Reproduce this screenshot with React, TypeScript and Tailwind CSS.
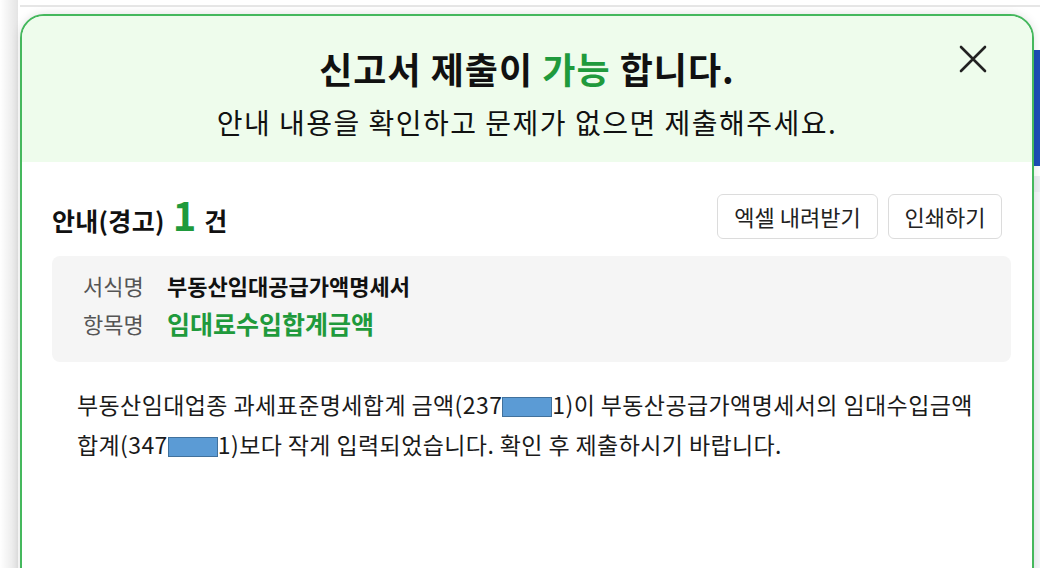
const FONT = "font-['Noto_Sans_CJK_KR','Noto_Sans',sans-serif]";

function Redacted({ w }: { w: number }) {
  return (
    <span
      className="inline-block h-[20px] bg-[#5b9bd5] border border-[#41719c] align-[-3px]"
      style={{ width: w }}
    />
  );
}

export default function App() {
  return (
    <div className={`relative w-[1040px] h-[568px] overflow-hidden bg-white ${FONT}`}>
      {/* page behind the modal */}
      <div className="absolute inset-0 flex flex-col">
        <div className="h-[5px]" />
        <div className="ml-[20px] h-[2px] bg-[#e6e6e6]" />
        <div className="flex-1 flex justify-end">
          <div className="w-[8px] flex flex-col">
            <div className="h-[43px]" />
            <div className="h-[116px] bg-[#1d4fb8]" />
            <div className="h-[10px]" />
            <div className="h-[16px] bg-[#eceff3]" />
            <div className="flex-1 bg-[#f4f6f9]" />
          </div>
        </div>
      </div>
      <div className="absolute left-0 top-0 bottom-0 w-[18px] bg-gradient-to-r from-white to-[#e4e4e4]" />

      {/* modal */}
      <div className="absolute left-[20px] top-[14px] w-[1014px] h-[600px] rounded-t-[24px] border-2 border-[#45b85d] bg-white overflow-hidden shadow-[0_0_10px_rgba(0,0,0,0.12)]">
        <div className="relative h-[146px] bg-[#eefcec] flex flex-col items-center pt-[28px]">
          <h1 className="text-[36px] font-bold leading-[48px] text-[#111] tracking-[1px]">
            신고서 제출이 <span className="text-[#1f9a3c]">가능</span> 합니다.
          </h1>
          <p className="mt-[10px] text-[28px] leading-[40px] text-[#111] tracking-[1.5px]">
            안내 내용을 확인하고 문제가 없으면 제출해주세요.
          </p>
          <button className="absolute right-[45px] top-[29px]">
            <svg width="28" height="28" viewBox="0 0 28 28" fill="none" stroke="#222" strokeWidth="2.6" strokeLinecap="round">
              <path d="M2 2L26 26M26 2L2 26" />
            </svg>
          </button>
        </div>

        <div className="px-[30px]">
          <div className="flex items-center justify-between pt-[32px]">
            <div className="flex items-baseline gap-[8px] text-[#111] font-bold">
              <span className="text-[25px] tracking-[0.3px]">안내(경고)</span>
              <span className="text-[40px] leading-none text-[#1f9a3c]">1</span>
              <span className="text-[25px]">건</span>
            </div>
            <div className="flex gap-[10px]">
              <button className="h-[45px] w-[161px] rounded-[6px] border border-[#dcdcdc] bg-white text-[22px] text-[#222]">
                엑셀 내려받기
              </button>
              <button className="h-[45px] w-[114px] rounded-[6px] border border-[#dcdcdc] bg-white text-[22px] text-[#222]">
                인쇄하기
              </button>
            </div>
          </div>

          <div className="mt-[16px] mr-[-9px] h-[106px] rounded-[8px] bg-[#f5f5f5] pl-[31px] pt-[13px] flex flex-col gap-[4px]">
            <div className="flex items-center h-[34px]">
              <span className="w-[84px] text-[22px] text-[#555]">서식명</span>
              <span className="text-[22px] font-bold text-[#111]">부동산임대공급가액명세서</span>
            </div>
            <div className="flex items-center h-[34px]">
              <span className="w-[84px] text-[22px] text-[#555]">항목명</span>
              <span className="text-[25px] font-bold text-[#1f9a3c]">임대료수입합계금액</span>
            </div>
          </div>

          <p className="mt-[22px] pl-[25px] text-[23px] leading-[40px] text-[#1a1a1a] tracking-[0.4px]">
            부동산임대업종 과세표준명세합계 금액(237<Redacted w={50} />1)이 부동산공급가액명세서의 임대수입금액
            <br />
            합계(347<Redacted w={50} />1)보다 작게 입력되었습니다. 확인 후 제출하시기 바랍니다.
          </p>
        </div>
      </div>
    </div>
  );
}
